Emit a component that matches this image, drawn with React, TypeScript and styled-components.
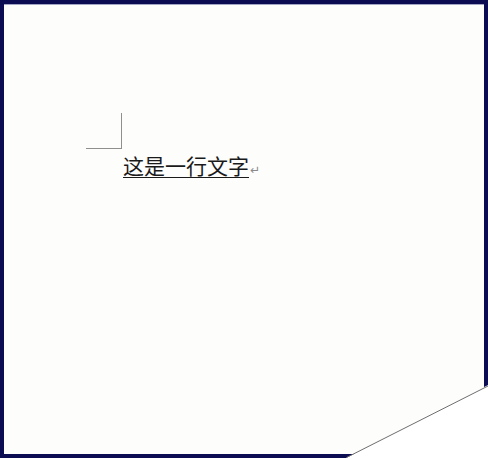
import React from "react";
import styled, { createGlobalStyle } from "styled-components";

const Global = createGlobalStyle`
  html, body { margin: 0; padding: 0; background: #ffffff; }
`;

const Frame = styled.div`
  position: relative;
  width: 488px;
  height: 458px;
  box-sizing: border-box;
  background: #0c0c52;
  padding: 4px 4px 4px 4px;
  overflow: hidden;
`;

const Page = styled.div`
  width: 100%;
  height: 100%;
  box-sizing: border-box;
  background: #fdfdfc;
  border-top: 1px solid #a3a6c4;
  padding-top: 108px;
`;

const CornerMark = styled.div`
  margin-left: 82px;
  width: 35px;
  height: 35px;
  border-right: 1px solid #8f8f8f;
  border-bottom: 1px solid #8f8f8f;
`;

const Line = styled.div`
  margin-left: 119px;
  margin-top: 4px;
  display: flex;
  align-items: baseline;
  font-family: "Noto Sans CJK SC", "Liberation Sans", sans-serif;
  font-size: 21px;
  line-height: 24px;
  color: #1a1a1a;
`;

const Underlined = styled.span`
  text-decoration: underline;
  text-decoration-thickness: 1px;
  text-underline-offset: 3px;
`;

const ParaMark = styled.span`
  font-family: "DejaVu Sans", sans-serif;
  font-size: 12px;
  color: #8a8a8a;
  margin-left: 1px;
`;

const Fold = styled.svg`
  position: absolute;
  right: 0;
  bottom: 0;
  display: block;
`;

export default function App() {
  return (
    <>
      <Global />
      <Frame>
        <Page>
          <CornerMark />
          <Line>
            <Underlined>这是一行文字</Underlined>
            <ParaMark>↵</ParaMark>
          </Line>
        </Page>
        <Fold width="142" height="73" viewBox="0 0 142 73">
          <polygon points="0,73 142,73 142,0" fill="#ffffff" />
          <line x1="0.5" y1="72.5" x2="142" y2="1" stroke="#6d6d6d" strokeWidth="1" />
        </Fold>
      </Frame>
    </>
  );
}
